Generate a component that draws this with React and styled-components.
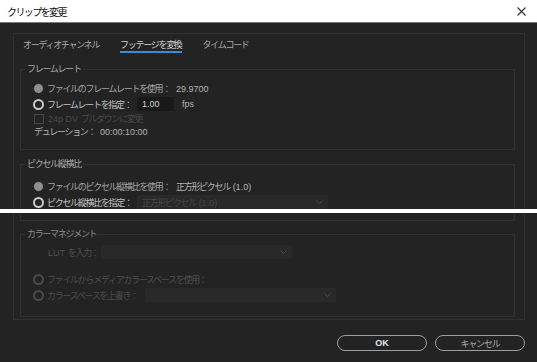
import styled, { createGlobalStyle } from "styled-components";

const GlobalStyle = createGlobalStyle`
  body {
    margin: 0;
    background: #232323;
  }
`;

const jp = `"Noto Sans CJK JP", "Liberation Sans", sans-serif`;
const latin = `"Liberation Sans", "Noto Sans CJK JP", sans-serif`;

const Window = styled.div`
  position: relative;
  width: 537px;
  height: 362px;
  display: flex;
  flex-direction: column;
  background: #232323;
  overflow: hidden;
  font-family: ${jp};
  font-size: 9px;
  letter-spacing: -1.3px;
  word-spacing: 2px;
`;

const TitleBar = styled.div`
  height: 22px;
  flex-shrink: 0;
  display: flex;
  align-items: center;
  justify-content: space-between;
  padding: 0 11px 0 7px;
  background: #ffffff;
  border-bottom: 1px solid #7c7c7c;
`;

const Title = styled.span`
  font-size: 10px;
  letter-spacing: -1.6px;
  color: #111;
`;

const Body = styled.div`
  padding: 10px 12px 0 13px;
`;

const Panel = styled.div`
  border: 1px solid #2f2f2f;
  padding: 0 9px 2px 6px;
`;

const Tabs = styled.div`
  height: 22px;
  display: flex;
  gap: 21px;
  padding: 5px 0 0 3px;
  box-sizing: border-box;
`;

const Tab = styled.div`
  line-height: 12px;
  height: 12px;
  color: ${(p) => (p.$active ? "#d2d2d2" : "#ababab")};
  border-bottom: 2px solid ${(p) => (p.$active ? "#3b8ad9" : "transparent")};
`;

const Group = styled.fieldset`
  margin: ${(p) => p.$mt}px 0 0;
  padding: ${(p) => p.$pt}px 0 ${(p) => p.$pb}px 0;
  border: 1px solid #303030;
  min-width: 0;
`;

const Legend = styled.legend`
  margin-left: 4px;
  padding: 0 2px;
  line-height: 14px;
  color: ${(p) => (p.$dim ? "#8c8c8c" : "#a9a9a9")};
`;

const Row = styled.div`
  height: ${(p) => p.$h}px;
  margin-top: ${(p) => p.$gap || 0}px;
  display: flex;
  align-items: center;
  padding-left: ${(p) => p.$indent ?? 12}px;
`;

const Radio = styled.span`
  width: 11px;
  height: 11px;
  box-sizing: border-box;
  border-radius: 50%;
  flex-shrink: 0;
  margin-right: 3px;
  ${(p) =>
    p.$filled
      ? "background: #8e8e8e; border: 1px solid #232323;"
      : `border: 2px solid ${p.$dim ? "#4a4a4a" : "#c9c9c9"};`}
`;

const Check = styled.span`
  width: 10px;
  height: 10px;
  box-sizing: border-box;
  margin: 0 4px 0 1px;
  border: 1px solid #474747;
`;

const Label = styled.span`
  width: ${(p) => (p.$w ? `${p.$w}px` : "auto")};
  flex-shrink: 0;
  white-space: nowrap;
  color: ${(p) => p.$color || "#b4b4b4"};
`;

const Lat = styled.span`
  font-family: ${latin};
  letter-spacing: 0;
  word-spacing: 0;
`;

const Value = styled.span`
  color: #b4b4b4;
`;

const NumberBox = styled.div`
  width: 37px;
  height: 14px;
  box-sizing: border-box;
  padding-left: 5px;
  display: flex;
  align-items: center;
  background: #191919;
  font-family: ${latin};
  letter-spacing: 0;
  color: #d4d4d4;
`;

const Unit = styled.span`
  margin-left: 8px;
  font-family: ${latin};
  letter-spacing: 0;
  color: #b4b4b4;
`;

const Select = styled.div`
  width: 191px;
  height: 14px;
  box-sizing: border-box;
  padding: 0 5px;
  display: flex;
  align-items: center;
  justify-content: space-between;
  background: #292929;
  color: #474747;
`;

const Footer = styled.div`
  display: flex;
  justify-content: flex-end;
  gap: 8px;
  padding: 15px 12px 0 0;
`;

const Button = styled.div`
  width: 90px;
  height: 16px;
  box-sizing: border-box;
  border: 1.5px solid #9d9d9d;
  border-radius: 9px;
  display: flex;
  align-items: center;
  justify-content: center;
  font-family: ${(p) => (p.$primary ? latin : jp)};
  font-weight: ${(p) => (p.$primary ? 700 : 400)};
  letter-spacing: ${(p) => (p.$primary ? "0" : "-1.2px")};
  color: ${(p) => (p.$primary ? "#e6e6e6" : "#a9a9a9")};
`;

const Splice = styled.div`
  position: absolute;
  left: 0;
  right: 0;
  top: 209px;
  height: 4px;
  background: #ffffff;
`;

const Chevron = () => (
  <svg width="7" height="4" viewBox="0 0 7 4">
    <path d="M0.5 0.5 L3.5 3.5 L6.5 0.5" fill="none" stroke="#4a4a4a" strokeWidth="1" />
  </svg>
);

const CloseIcon = () => (
  <svg width="9" height="9" viewBox="0 0 9 9">
    <path d="M0.5 0.5 L8.5 8.5 M8.5 0.5 L0.5 8.5" stroke="#333" strokeWidth="1.1" />
  </svg>
);

export default function App() {
  return (
    <>
      <GlobalStyle />
      <Window>
        <TitleBar>
          <Title>クリップを変更</Title>
          <CloseIcon />
        </TitleBar>
        <Body>
          <Panel>
            <Tabs>
              <Tab>オーディオチャンネル</Tab>
              <Tab $active>フッテージを変換</Tab>
              <Tab>タイムコード</Tab>
            </Tabs>

            <Group $mt={6} $pt={4} $pb={11}>
              <Legend>フレームレート</Legend>
              <Row $h={16}>
                <Radio $filled />
                <Label $w={129} $color="#a6a6a6">ファイルのフレームレートを使用：</Label>
                <Value><Lat>29.9700</Lat></Value>
              </Row>
              <Row $h={16}>
                <Radio />
                <Label $w={90} $color="#c4c4c4">フレームレートを指定：</Label>
                <NumberBox>1.00</NumberBox>
                <Unit>fps</Unit>
              </Row>
              <Row $h={13}>
                <Check />
                <Label $color="#4a4a4a"><Lat>24p DV</Lat> プルダウンに変更</Label>
              </Row>
              <Row $h={13} $indent={13}>
                <Label $w={66}>デュレーション：</Label>
                <Value><Lat>00:00:10:00</Lat></Value>
              </Row>
            </Group>

            <Group $mt={7} $pt={7} $pb={10}>
              <Legend>ピクセル縦横比</Legend>
              <Row $h={16}>
                <Radio $filled />
                <Label $w={129} $color="#a6a6a6">ファイルのピクセル縦横比を使用：</Label>
                <Value>正方形ピクセル <Lat>(1.0)</Lat></Value>
              </Row>
              <Row $h={16}>
                <Radio />
                <Label $w={90} $color="#c4c4c4">ピクセル縦横比を指定：</Label>
                <Select>
                  <span>正方形ピクセル <Lat>(1.0)</Lat></span>
                  <Chevron />
                </Select>
              </Row>
            </Group>

            <Group $mt={6} $pt={3} $pb={13}>
              <Legend $dim>カラーマネジメント</Legend>
              <Row $h={16} $indent={27}>
                <Label $w={53} $color="#505050"><Lat>LUT</Lat> を入力：</Label>
                <Select>
                  <span />
                  <Chevron />
                </Select>
              </Row>
              <Row $h={16} $gap={11}>
                <Radio $dim />
                <Label $color="#4d4d4d">ファイルからメディアカラースペースを使用：</Label>
              </Row>
              <Row $h={16}>
                <Radio $dim />
                <Label $w={98} $color="#4d4d4d">カラースペースを上書き：</Label>
                <Select>
                  <span />
                  <Chevron />
                </Select>
              </Row>
            </Group>
          </Panel>
        </Body>
        <Footer>
          <Button $primary>OK</Button>
          <Button>キャンセル</Button>
        </Footer>
        <Splice />
      </Window>
    </>
  );
}
